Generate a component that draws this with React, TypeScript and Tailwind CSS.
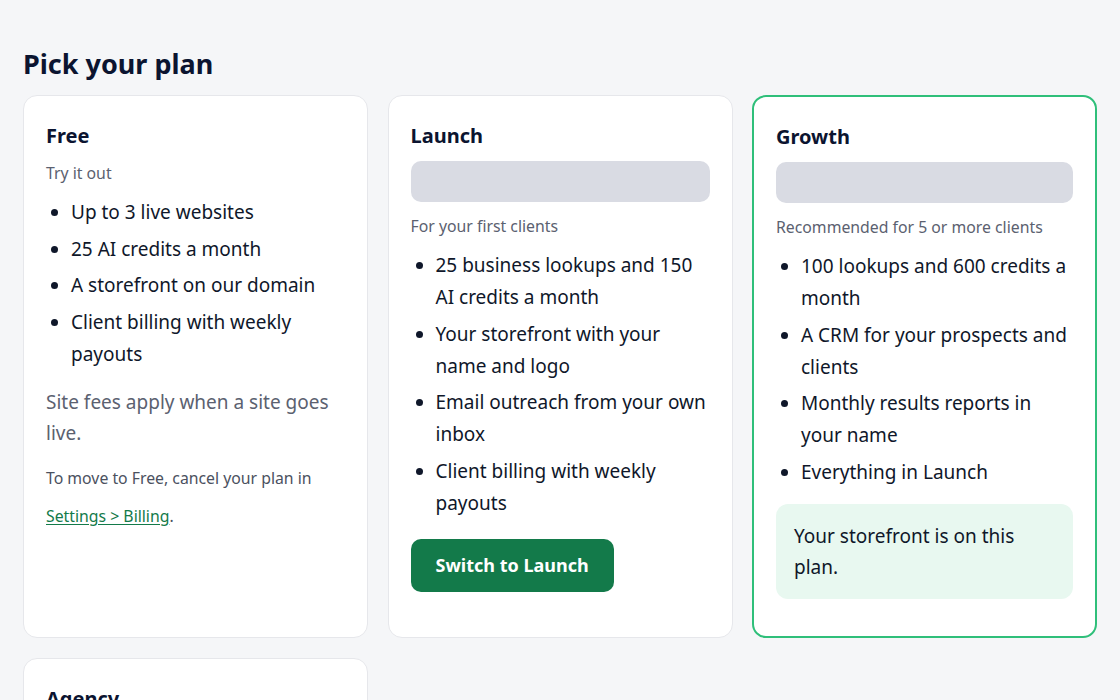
import { ReactNode } from 'react';

interface Plan {
  name: string;
  tagline: string;
  features: string[];
  current?: boolean;
  placeholder?: boolean;
  footer?: ReactNode;
}

const plans: Plan[] = [
  {
    name: 'Free',
    tagline: 'Try it out',
    features: ['Up to 3 live websites', '25 AI credits a month', 'A storefront on our domain', 'Client billing with weekly payouts'],
    footer: (
      <>
        <p className="mt-[17px] text-[19px] leading-[31px] text-[#5b6170]">Site fees apply when a site goes live.</p>
        <p className="mt-[10px] text-[15.8px] leading-[38px] text-[#4b5160]">
          To move to Free, cancel your plan in{' '}
          <a href="#" className="text-[#137a4a] underline underline-offset-2">Settings &gt; Billing</a>.
        </p>
      </>
    ),
  },
  {
    name: 'Launch',
    tagline: 'For your first clients',
    placeholder: true,
    features: ['25 business lookups and 150 AI credits a month', 'Your storefront with your name and logo', 'Email outreach from your own inbox', 'Client billing with weekly payouts'],
    footer: (
      <button className="mt-[20px] h-[53px] px-[25px] rounded-[10px] bg-[#137a4a] text-white text-[18px] font-bold">
        Switch to Launch
      </button>
    ),
  },
  {
    name: 'Growth',
    tagline: 'Recommended for 5 or more clients',
    placeholder: true,
    current: true,
    features: ['100 lookups and 600 credits a month', 'A CRM for your prospects and clients', 'Monthly results reports in your name', 'Everything in Launch'],
    footer: (
      <div className="mt-[16px] rounded-[12px] bg-[#e8f8f0] px-[18px] pt-[17px] pb-[16px] text-[19px] leading-[31px] text-[#0f172a]">
        Your storefront is on this plan.
      </div>
    ),
  },
];

function PlanCard({ plan }: { plan: Plan }) {
  return (
    <div
      className={`rounded-[14px] bg-white px-[22px] pt-[24px] pb-[37px] ${
        plan.current ? 'border-2 border-[#2fbf7a]' : 'border border-[#e6e7eb]'
      }`}
    >
      <h2 className="text-[20px] font-bold leading-[32px] text-[#0b1430]">{plan.name}</h2>
      {plan.placeholder && <div className="mt-[9px] h-[41px] rounded-[10px] bg-[#d9dbe3]" />}
      <p className={`${plan.placeholder ? 'mt-[11px]' : 'mt-[8px]'} text-[15.8px] leading-[26px] text-[#5b6170]`}>{plan.tagline}</p>
      <ul className="mt-[10px] list-disc pl-[25px] text-[19px] leading-[32px] text-[#0f172a] space-y-[4.5px]">
        {plan.features.map((f) => (
          <li key={f}>{f}</li>
        ))}
      </ul>
      {plan.footer}
    </div>
  );
}

export default function App() {
  return (
    <div className="min-h-[700px] bg-[#f5f6f8] px-[23px] pt-[44px] pb-10 font-['Noto_Sans',sans-serif]">
      <h1 className="text-[27px] font-bold leading-[40px] text-[#0b1430] mb-[11px]">Pick your plan</h1>
      <div className="grid grid-cols-3 gap-x-[19.5px] gap-y-[20px]">
        {plans.map((p) => (
          <PlanCard key={p.name} plan={p} />
        ))}
        <div className="rounded-[14px] bg-white border border-[#e6e7eb] px-[22px] pt-[24px] pb-[37px]">
          <h2 className="text-[20px] font-bold leading-[32px] text-[#0b1430]">Agency</h2>
          <p className="mt-[8px] text-[15.8px] leading-[26px] text-[#5b6170]">For larger teams</p>
        </div>
      </div>
    </div>
  );
}
